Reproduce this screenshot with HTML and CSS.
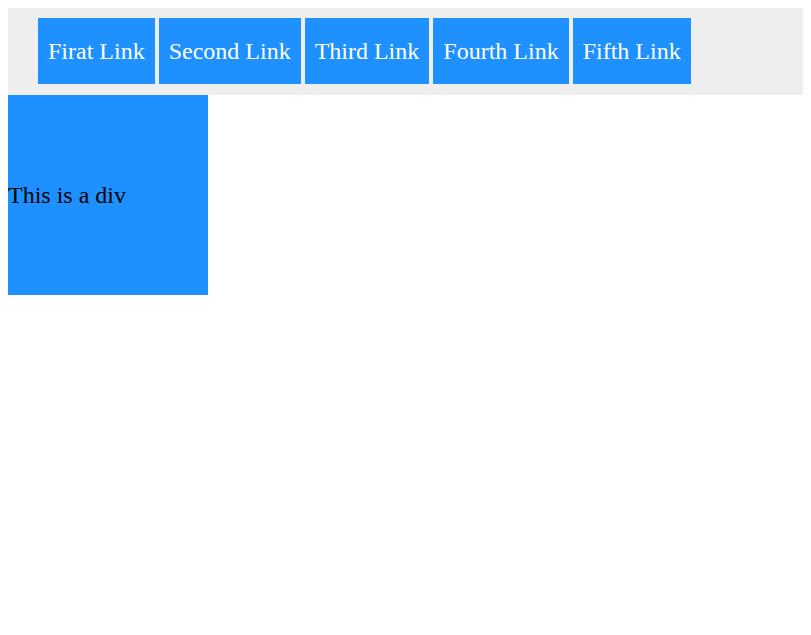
FILE: index.html
```html
<!DOCTYPE html>
<html>
<head>
<meta charset="utf-8">
<link rel="stylesheet" href="styles.css">
</head>
<body>
<nav class="nav">
  <ul class="nav-list">
    <li><a class="nav-link" href="#">Firat Link</a></li>
    <li><a class="nav-link" href="#">Second Link</a></li>
    <li><a class="nav-link" href="#">Third Link</a></li>
    <li><a class="nav-link" href="#">Fourth Link</a></li>
    <li><a class="nav-link" href="#">Fifth Link</a></li>
  </ul>
</nav>
<div class="box">This is a div</div>
</body>
</html>
```

FILE: styles.css
```css
body {
  margin: 8px;
  font-family: "Liberation Serif", "Times New Roman", serif;
  background: #fff;
}
.nav {
  background: #eeeeee;
  padding: 10px 0 11px 30px;
}
.nav-list {
  list-style: none;
  margin: 0;
  padding: 0;
  display: flex;
  gap: 4px;
}
.nav-link {
  display: block;
  height: 66px;
  line-height: 66px;
  padding: 0 10px;
  background: #1e90ff;
  color: #fff;
  font-size: 24px;
  text-decoration: none;
}
.box {
  width: 200px;
  height: 200px;
  background: #1e90ff;
  color: #000;
  font-size: 24px;
  display: flex;
  align-items: center;
}
```
